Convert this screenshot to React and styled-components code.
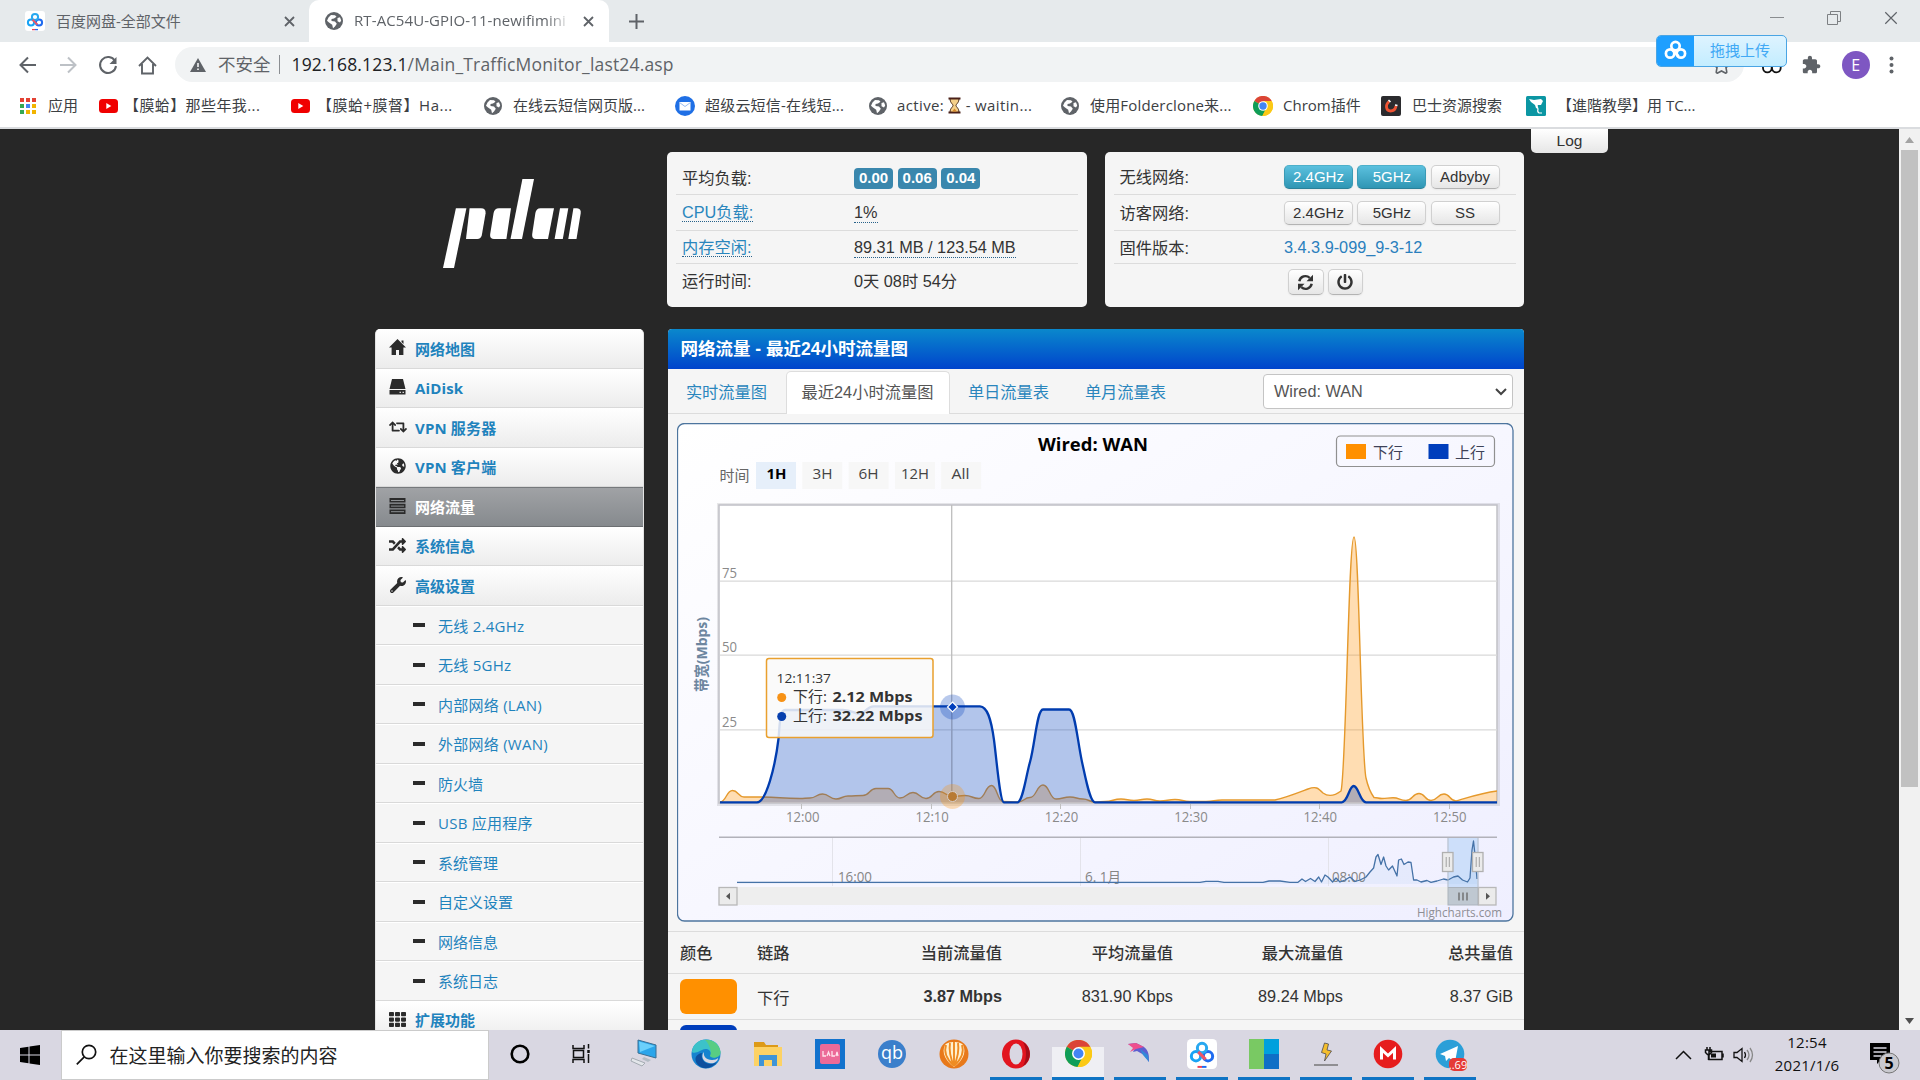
import React from "react";
import styled, { createGlobalStyle, css } from "styled-components";
import { FaRetweet, FaRandom, FaWrench, FaPowerOff, FaGlobeAmericas, FaTh, FaStar } from "react-icons/fa";

const UI = `"Open Sans", "Noto Sans CJK SC", sans-serif`;
const ARIAL = `"Liberation Sans", "Noto Sans CJK SC", sans-serif`;

const GlobalStyle = createGlobalStyle`
  * { box-sizing: border-box; }
  body { margin: 0; overflow: hidden; background: #272727; }
  button { font: inherit; padding: 0; margin: 0; border: 0; background: none; color: inherit; }
  svg { display: block; flex: none; }
`;

const Screen = styled.div`
  width: 1920px;
  height: 1080px;
  display: flex;
  flex-direction: column;
  overflow: hidden;
  font-family: ${UI};
  white-space: nowrap;
`;

/* ---------- browser chrome ---------- */
const TabStrip = styled.header`
  flex: none;
  height: 42px;
  display: flex;
  background: #e6eaec;
  color: #5f6368;
  font-size: 15px;
`;
const Tab = styled.div`
  width: ${(p) => p.$w}px;
  padding-left: ${(p) => p.$pad}px;
  display: flex;
  align-items: center;
  border-radius: 10px 10px 0 0;
  background: ${(p) => (p.$active ? "#fff" : "transparent")};
`;
const TabTitle = styled.span`
  width: ${(p) => p.$w}px;
  margin-left: ${(p) => p.$gap}px;
  padding-bottom: 2px;
  overflow: hidden;
  letter-spacing: ${(p) => p.$ls || 0}px;
  ${(p) => p.$fade && css`
    mask-image: linear-gradient(90deg, #000 88%, transparent);
  `}
`;
const NewTab = styled.div`
  width: 54px;
  display: flex;
  align-items: center;
  justify-content: center;
`;
const WindowControls = styled.div`
  margin-left: auto;
  padding: 11px 22px 0 0;
  display: flex;
  gap: 43px;
`;
const Toolbar = styled.div`
  position: relative;
  flex: none;
  height: 46px;
  padding: 5px 0 6px 17px;
  display: flex;
  align-items: center;
  background: #fff;
  color: #5f6368;
`;
const NavIcons = styled.div`
  width: 158px;
  display: flex;
  gap: 18px;
`;
const AddressBar = styled.div`
  width: 1569px;
  height: 35px;
  padding: 0 15px;
  display: flex;
  align-items: center;
  border-radius: 18px;
  background: #f1f3f4;
  font-size: 17.5px;
`;
const Unsafe = styled.span`
  margin: -2px 8px 0 12px;
`;
const Divider = styled.span`
  width: 1px;
  height: 19px;
  margin-right: 12px;
  background: #8b8e92;
`;
const Url = styled.span`
  margin-top: -2px;
  letter-spacing: 0.17px;
  b { font-weight: 400; color: #202124; }
`;
const StarSlot = styled.span`
  margin: 2px -1px 0 auto;
`;
const Extensions = styled.div`
  flex: 1;
  padding: 0 25.5px 0 18px;
  display: flex;
  align-items: center;
  justify-content: space-between;
`;
const Avatar = styled.span`
  width: 28px;
  height: 28px;
  display: grid;
  place-items: center;
  border-radius: 50%;
  background: #7e57c2;
  color: #fff;
  font-size: 16px;
`;
const DropUpload = styled.div`
  position: absolute;
  left: 1656px;
  top: -7px;
  width: 131px;
  height: 32px;
  display: flex;
  border: 1.5px solid #4aa5e4;
  border-radius: 5px;
  overflow: hidden;
  background: linear-gradient(#def3ff, #c3edff);
  color: #41a9f5;
  font-size: 15px;
`;
const DropIcon = styled.span`
  width: 37px;
  display: grid;
  place-items: center;
  background: #1e9fff;
`;
const DropText = styled.span`
  flex: 1;
  text-align: center;
  line-height: 29px;
`;
const Bookmarks = styled.nav`
  flex: none;
  height: 41px;
  padding: 0 0 4px 20px;
  display: flex;
  align-items: center;
  background: #fff;
  border-bottom: 2px solid #dadcdf;
  color: #3c4043;
  font-size: 15px;
`;
const Bookmark = styled.div`
  width: ${(p) => p.$w}px;
  display: flex;
  align-items: center;
  gap: ${(p) => p.$gap}px;
  letter-spacing: ${(p) => p.$ls || 0}px;
  > span { margin-top: -2px; }
`;

/* ---------- router page ---------- */
const Viewport = styled.div`
  flex: none;
  height: 901px;
  display: flex;
  overflow: hidden;
`;
const Page = styled.main`
  width: 1899px;
  height: 901px;
  padding-left: 375px;
  display: flex;
  align-items: flex-start;
  background: #272727;
  color: #333;
  font-family: ${ARIAL};
  font-size: 16.25px;
`;
const Container = styled.div`
  width: 1149px;
`;
const LogTab = styled.div`
  width: 77px;
  height: 24px;
  margin-left: 7px;
  border-radius: 0 0 5px 5px;
  background: linear-gradient(#fff, #e6e6e6);
  text-align: center;
  font-size: 15.5px;
  line-height: 24px;
`;
const TopRow = styled.div`
  height: 200px;
  padding-top: 23px;
  display: flex;
  align-items: flex-start;
`;
const LogoBox = styled.div`
  width: 292px;
  padding: 27px 0 0 68px;
`;
const InfoPanel = styled.section`
  width: 419.5px;
  height: 155px;
  margin-right: ${(p) => (p.$gap ? 18 : 0)}px;
  padding: ${(p) => (p.$gap ? "6px 9px 0" : "6px 8px 0 9px")};
  border-radius: 5px;
  background: #f5f5f5;
`;
const InfoRow = styled.div`
  height: ${(p) => p.$h}px;
  padding: ${(p) => p.$pt || 0}px 0 0 6px;
  display: flex;
  align-items: center;
  border-bottom: ${(p) => (p.$last ? 0 : 1)}px solid #dcdcdc;
`;
const InfoLabel = styled.div`
  width: ${(p) => p.$w || 172}px;
  margin-top: ${(p) => (p.$raise ? -2 : 0)}px;
`;
const Dotted = styled.span`
  padding-bottom: 0;
  border-bottom: 1px dotted #28628a;
  line-height: 19px;
  color: ${(p) => (p.$link ? "#2a86bd" : "#333")};
`;
const Badge = styled.span`
  width: 39px;
  height: 21px;
  margin-right: 4.7px;
  border-radius: 4px;
  background: #3a87ad;
  color: #fff;
  font-size: 15px;
  font-weight: 700;
  line-height: 20px;
  text-align: center;
`;
const Button = styled.button`
  width: ${(p) => p.$w || 69}px;
  height: ${(p) => p.$h || 24}px;
  margin-right: 4.3px;
  display: grid;
  place-items: center;
  border: 1px solid #d0d0d0;
  border-bottom-color: #b3b3b3;
  border-radius: 5px;
  background: linear-gradient(#fff, #e6e6e6);
  box-shadow: 0 1px 2px rgba(0, 0, 0, 0.05);
  font-size: 15px;
  ${(p) => p.$on && css`
    color: #fff;
    border-color: #4db0ca #3b9ab5 #2b8199;
    background: linear-gradient(#5bc0de, #2f96b4);
  `}
`;
const Version = styled.a`
  color: #2a7fbd;
`;
const Columns = styled.div`
  display: flex;
  align-items: flex-start;
`;
const Sidebar = styled.aside`
  width: 269px;
  height: 701px;
  margin-right: 23.5px;
  border: 1px solid #e3e3e3;
  border-width: 0 1px;
  border-radius: 5px 5px 0 0;
  overflow: hidden;
  background: #f5f5f5;
  font-family: ${UI};
  font-size: 15px;
  color: #1f83bd;
`;
const MenuItem = styled.div`
  height: 39.5px;
  padding-left: 12px;
  display: flex;
  align-items: center;
  border-bottom: 1px solid #d9d9d9;
  background: linear-gradient(#fff, #ececec);
  font-weight: 700;
  letter-spacing: ${(p) => (p.$latin ? 0.15 : 0)}px;
  ${(p) => p.$active && css`
    border-top: 1px solid #76797c;
    border-bottom-color: #6c6f72;
    background: linear-gradient(#a0a2a5, #868a8e);
    color: #fff;
  `}
`;
const MenuIcon = styled.span`
  width: 19px;
  margin: -1px 8px 0 0;
  display: grid;
  place-items: center;
  color: #2b2b2b;
`;
const SubItem = styled.div`
  height: 39.5px;
  padding-left: 62px;
  display: flex;
  align-items: center;
  border-top: 1px solid #fff;
  border-bottom: 1px solid #d9d9d9;
  background: #f5f5f5;
  letter-spacing: ${(p) => (p.$latin ? 0.25 : 0)}px;
  &::before {
    content: "";
    width: 12px;
    height: 4px;
    margin: 0 13px 0 -25px;
    background: #2b2b2b;
  }
`;
const Panel = styled.section`
  width: 856.5px;
  height: 701px;
  overflow: hidden;
  border-radius: 4px 4px 0 0;
  background: #f5f5f5;
`;
const PanelTitle = styled.h1`
  height: 40px;
  margin: 0;
  padding-left: 13px;
  background: linear-gradient(#0a88cc, #0044cc);
  color: #fff;
  font-size: 17.5px;
  font-weight: 700;
  line-height: 41px;
`;
const TabRow = styled.div`
  height: 45px;
  padding: 2px 11px 0 0;
  display: flex;
  border-bottom: 1px solid #dcdcdc;
`;
const PageTab = styled.div`
  width: ${(p) => p.$w}px;
  height: 43px;
  border: 1px solid transparent;
  border-bottom: 0;
  border-radius: 5px 5px 0 0;
  color: #2a86bd;
  line-height: 41px;
  text-align: center;
  ${(p) => p.$active && css`
    border-color: #ddd;
    background: #fff;
    color: #555;
  `}
`;
const Select = styled.div`
  width: 250px;
  height: 35px;
  margin: 3px 0 0 auto;
  padding: 0 5px 0 10px;
  display: flex;
  align-items: center;
  justify-content: space-between;
  border: 1px solid #c4c4c4;
  border-radius: 4px;
  background: #fff;
  color: #555;
`;
const ChartBox = styled.div`
  padding: 9px 0 9px 9px;
`;
const Table = styled.div`
  border-top: 1px solid #dcdcdc;
`;
const TableRow = styled.div`
  height: ${(p) => p.$h}px;
  padding: 0 11px ${(p) => (p.$head ? 2 : 0)}px 12.5px;
  display: grid;
  grid-template-columns: 77px 1fr 170px 171px 170px 170px;
  align-items: center;
  border-bottom: 1px solid #dcdcdc;
  text-align: right;
  font-weight: ${(p) => (p.$head ? 500 : 400)};
  > :nth-child(2) { text-align: left; }
  > :first-child { text-align: left; }
`;
const Swatch = styled.span`
  width: 57px;
  height: 35px;
  border-radius: 6px;
  background: ${(p) => p.$c};
`;
const ScrollTrack = styled.div`
  width: 21px;
  padding: 8px 2px 6px;
  display: flex;
  flex-direction: column;
  align-items: center;
  background: #f1f1f1;
`;
const ScrollThumb = styled.div`
  width: 17px;
  height: 637px;
  margin: 7px 0 auto;
  background: #c1c1c1;
`;

/* ---------- taskbar ---------- */
const Taskbar = styled.footer`
  flex: none;
  height: 50px;
  display: flex;
  background: #d9d7e2;
`;
const StartButton = styled.div`
  width: 60.5px;
  display: grid;
  place-items: center;
`;
const SearchBox = styled.div`
  width: 428.5px;
  padding: 0 0 1px 14px;
  display: flex;
  align-items: center;
  gap: 13px;
  border: 1px solid #cbcbcb;
  background: #fff;
  color: #222;
  font-size: 19px;
`;
const Apps = styled.div`
  display: flex;
`;
const TaskApp = styled.div`
  width: 62px;
  padding: 0 5px;
  display: flex;
  flex-direction: column;
  > span {
    flex: 1;
    display: grid;
    place-items: center;
    background: ${(p) => (p.$active ? "linear-gradient(transparent 17px, #efeff4 17px)" : "none")};
  }
  &::after {
    content: "";
    height: 3px;
    background: ${(p) => (p.$open ? "#0f74c4" : "transparent")};
  }
`;
const Tray = styled.div`
  margin-left: auto;
  padding-right: 25px;
  display: flex;
  align-items: center;
  color: #111;
`;
const Clock = styled.div`
  width: 90px;
  margin: -2px 15px 0 0;
  text-align: center;
  font-size: 15px;
  line-height: 23px;
  letter-spacing: 0.25px;
`;

/* ---------- drawings ---------- */
const Globe = ({ size = 18, c = "#5f6368" }) => (
  <svg width={size} height={size} viewBox="0 0 18 18">
    <circle cx="9" cy="9" r="9" fill={c} />
    <path d="M3.500 5.500 6 3l4 .2 1.500 1.600L9 6.500 6.500 7l0 2 3.500.5 1.800 2.200L10 14.500l-2 1.800-.8-3.500L4 10.500 2 8.800zM12.500 6l2.500-.8 1.200 3.300-1.200 2-2.500-1.200z" fill="#fff" />
  </svg>
);
const YouTube = () => (
  <svg width="19" height="14" viewBox="0 0 19 14">
    <rect width="19" height="14" rx="3.500" fill="#f00000" />
    <path d="M7.300 4v6l5-3z" fill="#fff" />
  </svg>
);
const Chrome = ({ size = 20 }) => (
  <svg width={size} height={size} viewBox="0 0 20 20">
    <circle cx="10" cy="10" r="10" fill="#fbc916" />
    <path d="M10 10 1.300 5a10 10 0 0 1 17.400 0z" fill="#db4437" />
    <path d="M1.300 5a10 10 0 0 0 8 15l4-8z" fill="#0f9d58" />
    <path d="M9.300 20A10 10 0 0 0 18.700 5H10l3.600 7z" fill="#fbc916" />
    <circle cx="10" cy="10" r="4.800" fill="#fff" />
    <circle cx="10" cy="10" r="3.700" fill="#4285f4" />
  </svg>
);
const NetDisk = ({ size = 20, mono, plate = true }) => (
  <svg width={size} height={size} viewBox="0 0 20 20" fill="none" strokeWidth="2">
    {plate && <rect width="20" height="20" rx="3" fill="#fff" />}
    <circle cx="6" cy="11.500" r="3.100" stroke={mono || "#18a3f5"} />
    <circle cx="14" cy="11.500" r="3.100" stroke={mono || "#1f6bf0"} />
    <circle cx="10" cy="6" r="3.100" stroke={mono || "#28a8f0"} />
    <path d="M7.500 8.600 12.400 13.600" stroke={mono || "#ef5466"} />
    {!mono && <path d="M7 18.600h3" stroke="#ef4056" strokeWidth="1.300" />}
    {!mono && <path d="M10 18.600h3" stroke="#1f6bf0" strokeWidth="1.300" />}
  </svg>
);
const Close = ({ s = 11, w = 1.8 }) => (
  <svg width={s} height={s} viewBox="0 0 11 11" stroke="currentColor" strokeWidth={w}>
    <path d="M1 1l9 9M10 1l-9 9" />
  </svg>
);
const ArrowBack = () => (
  <svg width="22" height="22" viewBox="0 0 22 22" fill="none" stroke="#5f6368" strokeWidth="2">
    <path d="M19 11H4M11 3.500 3.500 11l7.500 7.500" />
  </svg>
);
const ArrowForward = () => (
  <svg width="22" height="22" viewBox="0 0 22 22" fill="none" stroke="#bdc1c6" strokeWidth="2">
    <path d="M3 11h15M11 3.500 18.500 11 11 18.500" />
  </svg>
);
const Extension = () => (
  <svg width="20" height="20" viewBox="1 0 24 24" fill="#5f6368">
    <path d="M20.500 11H19V7c0-1.100-.9-2-2-2h-4V3.500C13 2.120 11.880 1 10.500 1S8 2.120 8 3.500V5H4c-1.100 0-1.990.9-1.990 2v3.800H3.500c1.490 0 2.700 1.210 2.700 2.700s-1.210 2.700-2.700 2.700H2V20c0 1.100.9 2 2 2h3.800v-1.500c0-1.490 1.210-2.700 2.700-2.700s2.700 1.210 2.700 2.700V22H17c1.100 0 2-.9 2-2v-4h1.500c1.380 0 2.500-1.120 2.500-2.500S21.880 11 20.500 11z" />
  </svg>
);
const Triangle = ({ up, c = "#505050" }) => (
  <svg width="9" height="6" viewBox="0 0 9 6">
    <path d={up ? "M0 6 4.500 0 9 6z" : "M0 0h9L4.500 6z"} fill={c} />
  </svg>
);
const InlineIcon = styled.span`
  display: inline-block;
  vertical-align: -3px;
`;
const Hourglass = () => (
  <InlineIcon>
    <svg width="13" height="17" viewBox="0 0 13 17">
      <path d="M2 1.500h9C11 6 8 7 8 8.500s3 2.500 3 7H2c0-4.500 3-5.500 3-7S2 6 2 1.500z" fill="#f5d08a" stroke="#4a2a18" />
      <path d="M.5 1.500h12M.5 15.500h12" stroke="#4a2018" strokeWidth="2" />
      <path d="M4 14.500l2.500-3 2.500 3z" fill="#d98a2b" />
    </svg>
  </InlineIcon>
);
const Logo = () => (
  <svg width="139" height="90" viewBox="0 0 139 90" fill="#fff">
    <path d="M12.900 29.300h10.500L11 89H0z" />
    <path d="M26.600 29.300H38q5 0 4.600 5l-3.800 22q-.8 3.700-4.500 3.700H23z" />
    <path d="M56 29.300h12L63.400 60H51q-4.500 0-3.800-5l3.400-21q.8-4.700 5.400-4.700z" />
    <path d="M79.400 0H91L79 60H67.500z" />
    <path d="M97.500 29.300H111L105 60H93q-4.500 0-3.800-5l3.200-21q.8-4.700 5.100-4.700z" />
    <path d="M117 29.300h8.300L119.800 60h-8.200zM130.400 29.300h3.600q4.400.5 3.700 5L133.500 60h-8.200z" />
  </svg>
);
const HomeGlyph = () => (
  <svg width="17" height="17" viewBox="0 0 17 17" fill="currentColor">
    <path d="M8.500 0 17 8.600h-2.600V16H10v-5H7v5H2.600V8.600H0zM12.500 1.500h2V5l-2-2z" />
  </svg>
);
const DiskGlyph = () => (
  <svg width="17" height="16" viewBox="0 0 17 16" fill="currentColor">
    <path d="M3 0h11l2.500 10H.5zM.5 11h16v4.500H.5z" />
    <path d="M10.500 13.300h1.500M13.500 13.300H15" stroke="#fff" />
  </svg>
);
const ServerGlyph = () => (
  <svg width="17" height="16" viewBox="0 0 17 16" fill="currentColor">
    <path d="M.5 0h16v4.500H.5zM.5 5.700h16v4.500H.5zM.5 11.400h16V16H.5z" />
    <path d="M2 2.500h13M2 8.100h13M2 13.700h13" stroke="#8c8f92" />
  </svg>
);
const Refresh = () => (
  <svg width="17" height="17" viewBox="0 0 17 17">
    <path d="M2.300 7.200A6.300 6.300 0 0 1 12.700 3.800M14.700 9.800A6.300 6.300 0 0 1 4.300 13.200" fill="none" stroke="#333" strokeWidth="2.400" />
    <path d="M16 .8v6.500H9.500zM1 16.200V9.700h6.500z" fill="#333" />
  </svg>
);

/* ---------- chart ---------- */
const smooth = (pts) =>
  pts.reduce((d, p, i) => {
    if (i === 0) return `M${p[0]} ${p[1]}`;
    const a = pts[i - 1];
    const m = (a[0] + p[0]) / 2;
    return `${d}C${m} ${a[1]} ${m} ${p[1]} ${p[0]} ${p[1]}`;
  }, "");
const line = (pts) => "M" + pts.map((p) => p.join(" ")).join("L");

const downA = [[720, 802], [732.5, 790.5], [744, 797], [760, 797], [800, 798.5], [810, 798], [822.5, 794], [836, 799], [848, 796], [863, 795.5], [876, 788.5], [888, 788.5], [900, 798], [913, 792.5], [926, 798.5], [939, 791.5], [952.5, 796.5], [965, 795.5], [979, 798.5], [991.5, 785.5], [1003, 801.5], [1018, 802], [1030, 797.5], [1043, 785], [1056, 799], [1070, 797], [1083, 799], [1095, 802], [1105, 801.5], [1121, 799], [1134, 800.5], [1147, 799], [1160, 801], [1175, 799.5], [1190, 801.5], [1206, 801.5], [1222, 800], [1250, 800], [1275, 800]];
const downB = [[1374, 797.5], [1382, 798.5], [1393, 797.8], [1406, 800.5], [1419, 793.5], [1431, 800.5], [1444, 794], [1456, 801]];
const down =
  smooth(downA) +
  "C1285 798 1300 792 1308 789C1316 786 1318 788 1323 793C1330 798 1337 794 1341 791C1346 775 1348.500 537 1354 537C1359 537 1361 756 1366 778C1368 787 1370 792 1374 797.500" +
  smooth(downB).replace(/^M[^C]*/, "") +
  "C1464 799 1480 793 1497 791";
const up =
  "M720 802.300H757C766 802.300 775 768 778.600 738C780 716 781 710 785 710H843C852 710 855 714 860 714C865 714 866 706.500 874 706.300H980C987 706.500 991 718 994 740C997 763 1000 802.300 1004 802.300H1018C1023 800 1026 776 1030 762C1035 744 1037 709.500 1043 709.500H1069C1075 709.500 1077 738 1082 762C1086 780 1090 802.300 1095 802.300H1341.700C1348 802 1349 786 1353.700 786C1358.500 786 1360 802 1366 802.300H1497";
const nav = [[737, 882.3], [1200, 882.3], [1206, 881.3], [1218, 881.3], [1224, 882.3], [1263, 882.3], [1269, 881], [1280, 881], [1290, 882.3], [1298, 882.3], [1302, 879], [1305.5, 881.5], [1310.5, 878.5], [1315, 881.5], [1318.7, 877], [1321.5, 882], [1325, 875], [1328, 877], [1332.6, 882], [1336, 878], [1340, 882], [1345, 880], [1350, 877], [1355, 881.5], [1360, 880], [1366, 877], [1370, 872], [1373.6, 868], [1376, 857], [1378, 854.5], [1381, 864.5], [1383.6, 857], [1386, 866], [1388.6, 870], [1392.5, 866], [1397, 876], [1398.6, 860], [1401.4, 859], [1404, 864.5], [1408, 862], [1411, 862.5], [1413.6, 880], [1417, 880], [1421, 882], [1427, 880.5], [1431, 882.3], [1437, 881], [1443.5, 879], [1448, 880], [1453.5, 877], [1458, 876], [1462.5, 880], [1467.5, 882], [1470, 878], [1472, 850], [1473.5, 841], [1475, 855], [1477, 879]];

const T = ({ x, y, w, size = 15, fill = "#333", bold, children }) => (
  <text x={x} y={y} fontSize={size} fill={fill} fontWeight={bold ? 700 : 400} textLength={w} lengthAdjust="spacingAndGlyphs">
    {children}
  </text>
);

const Chart = () => (
  <svg width="838" height="499" viewBox="677 423 838 499" fontFamily={UI}>
    <defs>
      <linearGradient id="bg" x1="0" y1="0" x2="1" y2="1">
        <stop offset="0" stopColor="#fff" />
        <stop offset="1" stopColor="#efefff" />
      </linearGradient>
    </defs>
    <rect x="677.500" y="423.500" width="835.500" height="497.500" rx="7" fill="url(#bg)" stroke="#4d759e" strokeWidth="1.300" />
    <T x={1038} y={450.5} w={110} size={18.5} fill="#000" bold>Wired: WAN</T>
    <T x={719.5} y={480.5} w={30} fill="#666">时间</T>
    {[["1H", 766.5, 20], ["3H", 812.5, 20], ["6H", 858.5, 20], ["12H", 901, 28], ["All", 951.5, 18]].map(([t, x, w], i) => (
      <g key={t}>
        <rect x={756 + i * 46.3} y="462" width="40" height="27" fill={i ? "#f7f7f7" : "#e6effa"} />
        <T x={x} y={478.5} w={w} size={15} fill={i ? "#444" : "#000"} bold={!i}>{t}</T>
      </g>
    ))}
    <rect x="1336.500" y="436" width="158" height="30.500" rx="4" fill="none" stroke="#909090" strokeWidth="1.200" />
    <rect x="1346" y="444" width="20" height="15" fill="#ff9000" />
    <T x={1373} y={457.5} w={30} fill="#3e4257">下行</T>
    <rect x="1428.500" y="444" width="20" height="15" fill="#003ebc" />
    <T x={1455} y={457.5} w={30} fill="#3e4257">上行</T>

    <rect x="719" y="505" width="779" height="299" fill="#fefeff" stroke="#000" strokeOpacity=".09" strokeWidth="4" />
    <rect x="719" y="505" width="778" height="298" fill="#fff" stroke="#c0c0c6" strokeWidth="1.500" />
    <g stroke="#d9d9d9" strokeWidth="1.300">
      <path d="M720 581.200H1497M720 655.200H1497M720 729.800H1497" />
      <path d="M951.700 505V802" stroke="#bdbdbd" />
    </g>
    <path d="M801.500 804v5M931.500 804v5M1060.500 804v5M1190.500 804v5M1319.500 804v5M1449.500 804v5" stroke="#c0c0c0" />
    <path d={`${down}V802.300H720Z`} fill="#ff9000" fillOpacity=".3" />
    <path d={down} fill="none" stroke="#e5992c" strokeWidth="1.400" />
    <path d={`${up}H720Z`} fill="#003ebc" fillOpacity=".3" />
    <path d={up} fill="none" stroke="#003caf" strokeWidth="2.300" />
    <path d="M951.700 706V802" stroke="#8f9dbd" strokeWidth="1.300" />
    <circle cx="952.500" cy="796.500" r="12.500" fill="#ff9000" fillOpacity=".28" />
    <circle cx="952.500" cy="796.500" r="5" fill="#b87a33" stroke="#d8cdc8" />
    <circle cx="952.500" cy="707" r="12.500" fill="#003ebc" fillOpacity=".28" />
    <path d="M952.500 702l5 5-5 5-5-5z" fill="#003ebc" stroke="#fff" strokeWidth="1.200" />
    <T x={722} y={577.5} w={15} size={14} fill="#8a8a8a">75</T>
    <T x={722} y={651.5} w={15} size={14} fill="#8a8a8a">50</T>
    <T x={722} y={726.5} w={15} size={14} fill="#8a8a8a">25</T>
    {["12:00", "12:10", "12:20", "12:30", "12:40", "12:50"].map((t, i) => (
      <T key={t} x={786 + i * 129.4} y={822} w={33.5} size={14} fill="#8a8a8a">{t}</T>
    ))}
    <g transform="translate(707 692) rotate(-90)">
      <T x={0} y={0} w={75} size={14.5} fill="#6d869f" bold>带宽(Mbps)</T>
    </g>

    <rect x="766.500" y="658.500" width="166.500" height="79" rx="2.500" fill="#f9f9f9" fillOpacity=".85" stroke="#e9a02e" strokeWidth="1.500" />
    <T x={776.5} y={683} w={54.5} size={12.5}>12:11:37</T>
    <circle cx="781.700" cy="697.500" r="4.500" fill="#f79216" />
    <T x={793} y={702} w={34}>下行:</T>
    <T x={832.5} y={702} w={80} bold>2.12 Mbps</T>
    <circle cx="781.700" cy="716.500" r="4.500" fill="#063fae" />
    <T x={793} y={721} w={34}>上行:</T>
    <T x={832.5} y={721} w={90} bold>32.22 Mbps</T>

    <path d="M719 837.300H1497" stroke="#b2b2ba" strokeWidth="1.500" />
    <path d="M832.500 838v48M1080.500 838v48M1328.500 838v48" stroke="#e3e3ea" />
    <T x={838} y={882} w={34} size={14} fill="#858585">16:00</T>
    <T x={1085} y={882} w={36} size={14} fill="#858585">6. 1月</T>
    <T x={1332} y={882} w={34} size={14} fill="#858585">08:00</T>
    <rect x="1447.500" y="838" width="31" height="49" fill="#c7dcf9" fillOpacity=".85" />
    <path d={line(nav) + "V884H737Z"} fill="#7fb0e0" fillOpacity=".1" />
    <path d={line(nav)} fill="none" stroke="#4572a7" strokeWidth="1.300" strokeLinejoin="round" />
    <path d="M1448 838v49M1478 838v49" stroke="#b8bfc9" />
    {[1442.5, 1472.5].map((x) => (
      <g key={x}>
        <rect x={x} y="852.500" width="10.500" height="19" fill="#ebebeb" stroke="#b0b0b0" strokeWidth="1.300" />
        <path d={`M${x + 3.7} 857v10M${x + 6.8} 857v10`} stroke="#a0a0a0" />
      </g>
    ))}
    <rect x="737" y="887" width="741" height="18" fill="#eeeeee" />
    <rect x="1448" y="887.500" width="30" height="17.500" fill="#bfc8d1" stroke="#abb3bc" />
    <path d="M1459 892.500v8M1463 892.500v8M1467 892.500v8" stroke="#666" strokeWidth="1.300" />
    <rect x="719" y="887.500" width="18" height="17.500" fill="#ebebeb" stroke="#b8b8b8" strokeWidth="1.300" />
    <rect x="1478.500" y="887.500" width="17.500" height="17.500" fill="#ebebeb" stroke="#b8b8b8" strokeWidth="1.300" />
    <path d="M726 896.300l4-3.500v7zM1490 896.300l-4-3.500v7z" fill="#555" />
    <T x={1417} y={917} w={85} size={12} fill="#8e8e94">Highcharts.com</T>
  </svg>
);

/* ---------- taskbar icons ---------- */
const Svg = ({ children, s = 30, ...rest }) => (
  <svg width={s} height={s} viewBox="0 0 30 30" {...rest}>{children}</svg>
);
const apps = [
  { id: "cortana", icon: <Svg><circle cx="15" cy="15" r="8.300" fill="none" stroke="#000" strokeWidth="2.600" /></Svg> },
  { id: "taskview", icon: <Svg fill="none" stroke="#111" strokeWidth="1.500"><path d="M6 6v3.500h11V6M6 24v-3.500h11V24M6.500 11.500h10v7h-10zM21.500 5v4.500M21.500 15v9" /><path d="M21.500 11v3" strokeWidth="2.500" /></Svg> },
  { id: "pc", icon: <Svg><path d="M9 1l18 5v13L9 14z" fill="#2aa5ea" stroke="#3a6f93" /><path d="M10 2.500l16 4.500L11 13z" fill="#6bd0fb" /><path d="M15 18l7 3-3 2-6-3z" fill="#b3bcc4" /><path d="M3 19l13 5-3 3-11-5z" fill="#e3e6ea" stroke="#a4abb2" /></Svg> },
  { id: "edge", icon: <Svg><circle cx="15" cy="15" r="14.500" fill="#1683cf" /><path d="M1 13C2-3 28-4 29.500 13c0 6-8 7-10.500 4 3-5-3-9-8-6-4 2-8 4-10 2z" fill="#3cc2c9" /><path d="M14 1c9-1 15 6 15.500 12 0 6-8 7-10.500 4 3-4-2-14-5-16z" fill="#62d06b" opacity=".75" /><path d="M11 14c-2 8 6 14 15 9-5 7-14 8-19 3-5-6-2-11 4-12z" fill="#0e4f9e" /><path d="M13 13c-1 4 2 8 8 8 3 0 5-1 6-2 0 4-5 6-9 5-7-1-8-8-5-11z" fill="#d9d7e2" /></Svg> },
  { id: "files", icon: <Svg><path d="M1 3h10l2 3h12v5H1z" fill="#dd9a17" /><path d="M1 8h28v19H1z" fill="#fdd264" /><path d="M6 27V16h18v11h-5v-6h-8v6z" fill="#3f94d7" /></Svg> },
  { id: "cam", icon: <Svg><path d="M0 0h30v30H0z" fill="#1272cd" /><rect x="5" y="5" width="20" height="20" rx="2" fill="#ec6a98" /><path d="M8 12v5h3M12 17l1.500-4 1.500 4M17 12v5h3M21 17l1-4 1 4" fill="none" stroke="#ffe3ec" strokeWidth="1.300" /></Svg> },
  { id: "qb", icon: <Svg><circle cx="15" cy="15" r="14" fill="#3b7fcb" /><text x="15" y="20" fontSize="18" fill="#fff" textAnchor="middle" fontFamily="Open Sans, sans-serif">qb</text></Svg> },
  { id: "shell", icon: <Svg><circle cx="15" cy="15" r="14.500" fill="#e8791a" /><path d="M15 28C7 22 2 14 6 6c2-4 16-4 18 0 4 8-1 16-9 22z" fill="#fff1d0" /><path d="M15 27C7 20 5 12 7 6M15 27c8-7 10-15 8-21M15 27V3M15 27C11 18 10 10 11 4M15 27c4-9 5-17 4-23" stroke="#ef8c22" strokeWidth="1.900" fill="none" /></Svg> },
  { id: "opera", open: 1, icon: <Svg><ellipse cx="15" cy="15" rx="14" ry="14.500" fill="#e2151f" /><ellipse cx="15" cy="15" rx="6.500" ry="10.500" fill="#d9d7e2" /><path d="M22 3c9 5 9 19 0 24 4-7 4-17 0-24z" fill="#a50d18" /></Svg> },
  { id: "chrome", open: 1, active: 1, icon: <Chrome size={27} /> },
  { id: "bird", open: 1, icon: <Svg><path d="M3 5l8-1 8 4c5 4 5 8 5 15l-5-7-7-4-4 1 2-4z" fill="#5d5fd0" /><path d="M3 5l8-1 8 4-8 2-6 3 3-4z" fill="#ee4f8d" /><path d="M15 10l8 6 1 7-6-7z" fill="#3389d8" /></Svg> },
  { id: "disk", open: 1, icon: <NetDisk size={30} /> },
  { id: "tiles", open: 1, icon: <Svg><path d="M0 0h15v30H0z" fill="#79c963" /><path d="M15 0h15v15H15z" fill="#00a0dd" /><path d="M15 15h15v15H15z" fill="#0f6fc6" /></Svg> },
  { id: "bolt", open: 1, icon: <Svg><path d="M13.500 4l4 1-1.500 6 4.500 1-7 10 1.500-7-4.500-1.500z" fill="#f4bd2b" stroke="#4c4a50" strokeWidth=".8" /><path d="M3 26h24" stroke="#666" strokeWidth="1.300" /></Svg> },
  { id: "mega", open: 1, icon: <Svg><circle cx="15" cy="15" r="14.300" fill="#e61d1d" /><path d="M8.500 20.500v-10l6.500 6 6.500-6v10" fill="none" stroke="#fff" strokeWidth="3" /></Svg> },
  { id: "telegram", open: 1, icon: <Svg overflow="visible"><circle cx="15" cy="15" r="14.300" fill="#2b9fd8" /><path d="M5 15l18-8-3 16-6-4-3 3-1-5z" fill="#fff" /><rect x="14" y="19" width="18" height="13" rx="5" fill="#e53a36" /><text x="23" y="29.500" fontSize="11" fill="#fff" textAnchor="middle" fontFamily="Open Sans, sans-serif">..69</text></Svg> },
];

const appDots = ["#e34133", "#e34133", "#e34133", "#34a853", "#4285f4", "#f2b400", "#34a853", "#f2b400", "#f2b400"];
const bookmarks = [
  { w: 79, gap: 12, t: "应用", icon: <svg width="16" height="16" viewBox="0 0 16 16">{appDots.map((c, i) => <rect key={i} x={(i % 3) * 6} y={Math.floor(i / 3) * 6} width="4" height="4" fill={c} />)}</svg> },
  { w: 192, gap: 6, ls: 0.4, t: "【膜蛤】那些年我...", icon: <YouTube /> },
  { w: 193, gap: 7, ls: 0.5, t: "【膜蛤+膜督】Ha...", icon: <YouTube /> },
  { w: 191, gap: 11, t: "在线云短信网页版...", icon: <Globe /> },
  { w: 194, gap: 10, ls: 0.2, t: "超级云短信-在线短...", icon: <svg width="20" height="20" viewBox="0 0 20 20"><circle cx="10" cy="10" r="10" fill="#1f6fe5" /><path d="M4.500 6h11v8.500h-11z" fill="#fff" /><path d="M4.500 6.500l5.500 4 5.500-4" stroke="#9bbdf0" fill="none" /></svg> },
  { w: 192, gap: 10, ls: 0.37, t: <>active: <Hourglass /> - waitin...</>, icon: <Globe /> },
  { w: 192, gap: 11, ls: 0.17, t: "使用Folderclone来...", icon: <Globe /> },
  { w: 128, gap: 10, ls: 0, t: "Chrom插件", icon: <Chrome /> },
  { w: 145, gap: 11, t: "巴士资源搜索", icon: <svg width="20" height="20" viewBox="0 0 20 20"><rect width="20" height="20" rx="2" fill="#2b2b2e" /><path d="M8 5.500C4 9 5 15 9.500 15c3.500 0 5-2 5.500-5" fill="none" stroke="#ee5333" strokeWidth="2.800" /><path d="M7.500 4l2 2M14 9l2.500.5" stroke="#fff" strokeWidth="1.500" /></svg> },
  { w: 200, gap: 11, ls: 0, t: "【進階教學】用 TC...", icon: <svg width="20" height="20" viewBox="0 0 20 20"><rect width="20" height="20" rx="1.500" fill="#0b96a3" /><path d="M3 3l5 1 7-1 2 2-2 4-3 0-1 2 1 2-2-1-1-3-4-3z" fill="#fff" /><path d="M11 10l1 3q-1 3 1 4h3" stroke="#fff" strokeWidth="1.200" fill="none" /></svg> },
];

const menu = [
  ["网络地图", <HomeGlyph />],
  ["AiDisk", <DiskGlyph />],
  ["VPN 服务器", <FaRetweet size={18} />],
  ["VPN 客户端", <FaGlobeAmericas size={16} />],
  ["网络流量", <ServerGlyph />],
  ["系统信息", <FaRandom size={17} />],
  ["高级设置", <FaWrench size={16} />],
];
const subMenu = ["无线 2.4GHz", "无线 5GHz", "内部网络 (LAN)", "外部网络 (WAN)", "防火墙", "USB 应用程序", "系统管理", "自定义设置", "网络信息", "系统日志"];
const hasLatin = (t) => /[A-Z]/.test(t);

export default function App() {
  return (
    <Screen>
      <GlobalStyle />
      <TabStrip>
        <Tab $w={309} $pad={25}>
          <NetDisk />
          <TabTitle $w={228} $gap={11}>百度网盘-全部文件</TabTitle>
          <Close />
        </Tab>
        <Tab $w={300} $pad={16} $active>
          <Globe />
          <TabTitle $w={218} $gap={11} $ls={0.1} $fade>RT-AC54U-GPIO-11-newifimini</TabTitle>
          <svg width="11" />
          <Close />
        </Tab>
        <NewTab>
          <svg width="15" height="15" viewBox="0 0 15 15" stroke="#5f6368" strokeWidth="2"><path d="M7.500 0v15M0 7.500h15" /></svg>
        </NewTab>
        <WindowControls>
          <svg width="14" height="14" viewBox="0 0 14 14" stroke="#8a8d90"><path d="M0 6.500h14" /></svg>
          <svg width="14" height="14" viewBox="0 0 14 14" fill="none" stroke="#7d8083"><path d="M.5 3.500h10v10H.5zM3.500 3.500v-3h10v10h-3" /></svg>
          <Close s={14} w={0.9} />
        </WindowControls>
      </TabStrip>

      <Toolbar>
        <NavIcons>
          <ArrowBack />
          <ArrowForward />
          <svg width="22" height="22" viewBox="0 0 22 22" fill="none" stroke="#5f6368" strokeWidth="2"><path d="M18 7A8 8 0 1 0 19 12" /><path d="M19.500 3v7h-7z" fill="#5f6368" stroke="none" /></svg>
          <svg width="22" height="22" viewBox="0 0 22 22" fill="none" stroke="#5f6368" strokeWidth="1.900"><path d="M2 12 10.500 3.500 19 12M5 10v9.500h11V10" /></svg>
        </NavIcons>
        <AddressBar>
          <svg width="16" height="14" viewBox="0 0 16 14"><path d="M8 0l8 14H0z" fill="#5f6368" /><path d="M8 5v4M8 10.500v1.500" stroke="#fff" strokeWidth="1.500" /></svg>
          <Unsafe>不安全</Unsafe>
          <Divider />
          <Url><b>192.168.123.1</b>/Main_TrafficMonitor_last24.asp</Url>
          <StarSlot><FaStar size={17} fill="none" stroke="#5f6368" strokeWidth="55" /></StarSlot>
        </AddressBar>
        <Extensions>
          <svg width="20" height="22" viewBox="0 0 20 22" fill="none" stroke="#111" strokeWidth="1.800"><path d="M1 8v6a4.300 4.300 0 0 0 8.700 0V8M10 8v6a4.300 4.300 0 0 0 8.700 0V8" /></svg>
          <Extension />
          <Avatar>E</Avatar>
          <svg width="5" height="18" viewBox="0 0 5 18" fill="#5f6368"><circle cx="2.500" cy="2.500" r="2" /><circle cx="2.500" cy="9" r="2" /><circle cx="2.500" cy="15.500" r="2" /></svg>
        </Extensions>
        <DropUpload>
          <DropIcon><NetDisk size={27} mono="#fff" plate={false} /></DropIcon>
          <DropText>拖拽上传</DropText>
        </DropUpload>
      </Toolbar>

      <Bookmarks>
        {bookmarks.map((b, i) => (
          <Bookmark key={i} $w={b.w} $gap={b.gap} $ls={b.ls}>
            {b.icon}
            <span>{b.t}</span>
          </Bookmark>
        ))}
      </Bookmarks>

      <Viewport>
        <Page>
          <Container>
            <TopRow>
              <LogoBox><Logo /></LogoBox>
              <InfoPanel $gap>
                <InfoRow $h={37} $pt={4}>
                  <InfoLabel $raise>平均负载:</InfoLabel>
                  <Badge>0.00</Badge><Badge>0.06</Badge><Badge>0.04</Badge>
                </InfoRow>
                <InfoRow $h={36}><InfoLabel><Dotted $link>CPU负载:</Dotted></InfoLabel><Dotted>1%</Dotted></InfoRow>
                <InfoRow $h={33} $pt={1}><InfoLabel><Dotted $link>内存空闲:</Dotted></InfoLabel><Dotted>89.31 MB / 123.54 MB</Dotted></InfoRow>
                <InfoRow $h={32} $last><InfoLabel>运行时间:</InfoLabel><span>0天 08时 54分</span></InfoRow>
              </InfoPanel>
              <InfoPanel>
                <InfoRow $h={37} $pt={1}>
                  <InfoLabel $raise $w={164.5}>无线网络:</InfoLabel>
                  <Button $on>2.4GHz</Button><Button $on>5GHz</Button><Button>Adbyby</Button>
                </InfoRow>
                <InfoRow $h={36}>
                  <InfoLabel $raise $w={164.5}>访客网络:</InfoLabel>
                  <Button>2.4GHz</Button><Button>5GHz</Button><Button>SS</Button>
                </InfoRow>
                <InfoRow $h={33}><InfoLabel $w={164.5}>固件版本:</InfoLabel><Version>3.4.3.9-099_9-3-12</Version></InfoRow>
                <InfoRow $h={36} $last>
                  <InfoLabel $w={168.5} />
                  <Button $w={35.5} $h={26}><Refresh /></Button>
                  <Button $w={35} $h={26}><FaPowerOff size={16} color="#333" /></Button>
                </InfoRow>
              </InfoPanel>
            </TopRow>

            <Columns>
              <Sidebar>
                {menu.map(([t, icon]) => (
                  <MenuItem key={t} $active={t === "网络流量"} $latin={hasLatin(t)}><MenuIcon>{icon}</MenuIcon>{t}</MenuItem>
                ))}
                {subMenu.map((t) => <SubItem key={t} $latin={hasLatin(t)}>{t}</SubItem>)}
                <MenuItem><MenuIcon><FaTh size={17} /></MenuIcon>扩展功能</MenuItem>
              </Sidebar>

              <Panel>
                <PanelTitle>网络流量 - 最近24小时流量图</PanelTitle>
                <TabRow>
                  <PageTab $w={118}>实时流量图</PageTab>
                  <PageTab $w={164} $active>最近24小时流量图</PageTab>
                  <PageTab $w={118}>单日流量表</PageTab>
                  <PageTab $w={116}>单月流量表</PageTab>
                  <Select>
                    Wired: WAN
                    <svg width="12" height="8" viewBox="0 0 12 8" fill="none" stroke="#444" strokeWidth="2"><path d="M1 1l5 5 5-5" /></svg>
                  </Select>
                </TabRow>
                <ChartBox><Chart /></ChartBox>
                <Table>
                  <TableRow $h={42} $head>
                    <span>颜色</span><span>链路</span><span>当前流量值</span><span>平均流量值</span><span>最大流量值</span><span>总共量值</span>
                  </TableRow>
                  <TableRow $h={46}>
                    <Swatch $c="#ff9000" /><span>下行</span><b>3.87 Mbps</b><span>831.90 Kbps</span><span>89.24 Mbps</span><span>8.37 GiB</span>
                  </TableRow>
                  <TableRow $h={46}>
                    <Swatch $c="#003ebc" />
                  </TableRow>
                </Table>
              </Panel>
            </Columns>
          </Container>
          <LogTab>Log</LogTab>
        </Page>
        <ScrollTrack>
          <Triangle up c="#a3a3a3" />
          <ScrollThumb />
          <Triangle />
        </ScrollTrack>
      </Viewport>

      <Taskbar>
        <StartButton>
          <svg width="20" height="20" viewBox="0 0 20 20"><path d="M0 3l8.500-1.300v7.800H0zM9.500 1.500 20 0v9.500H9.500zM0 10.500h8.500v7.800L0 17zM9.500 10.500H20V20L9.500 18.500z" /></svg>
        </StartButton>
        <SearchBox>
          <svg width="21" height="21" viewBox="0 0 21 21" fill="none" stroke="#111" strokeWidth="1.700"><circle cx="13" cy="8" r="6.700" /><path d="M8.300 12.800.8 20.300" /></svg>
          在这里输入你要搜索的内容
        </SearchBox>
        <Apps>
          {apps.map((a) => (
            <TaskApp key={a.id} $open={a.open} $active={a.active}><span>{a.icon}</span></TaskApp>
          ))}
        </Apps>
        <Tray>
          <svg width="17" height="10" viewBox="0 0 17 10" fill="none" stroke="#111" strokeWidth="1.500"><path d="M1 9l7.500-7.500L16 9" /></svg>
          <svg width="21" height="16" viewBox="-12 0 33 16" fill="none" stroke="#111" strokeWidth="1.500" style={{ display: "none" }} />
          <svg width="33" height="16" viewBox="-12 0 33 16" fill="none" stroke="#111" strokeWidth="1.500"><path d="M5 4.500h13v8H5zM19 6.500v4M3 0v3M6 0v3M1.500 3h6v2.500l-2 2h-2l-2-2zM4.500 7v6" /><path d="M7 6.500h5v4H7z" fill="#111" stroke="none" /></svg>
          <svg width="30" height="18" viewBox="-8 0 30 18" fill="none" stroke="#111" strokeWidth="1.300"><path d="M1 6.500h3l5-4v13l-5-4H1zM11.500 6q2 3 0 6" /><path d="M14 4q4 5 0 10M17 2q5 7 0 14" stroke="#888" /></svg>
          <svg width="7" />
          <Clock>12:54<br />2021/1/6</Clock>
          <svg width="34" height="36" viewBox="0 0 34 36" style={{ margin: "8px -6px 0 0" }}>
            <path d="M3 2h20v17h-9l-4 4v-4H3z" /><path d="M6.500 7h13M6.500 11h13M6.500 15h8" stroke="#d9d7e2" strokeWidth="1.300" />
            <circle cx="22" cy="22" r="10" fill="#c9c9cf" stroke="#777" />
            <text x="22" y="28" fontSize="16" fontWeight="700" textAnchor="middle" fontFamily="Open Sans, sans-serif">5</text>
          </svg>
        </Tray>
      </Taskbar>
    </Screen>
  );
}
